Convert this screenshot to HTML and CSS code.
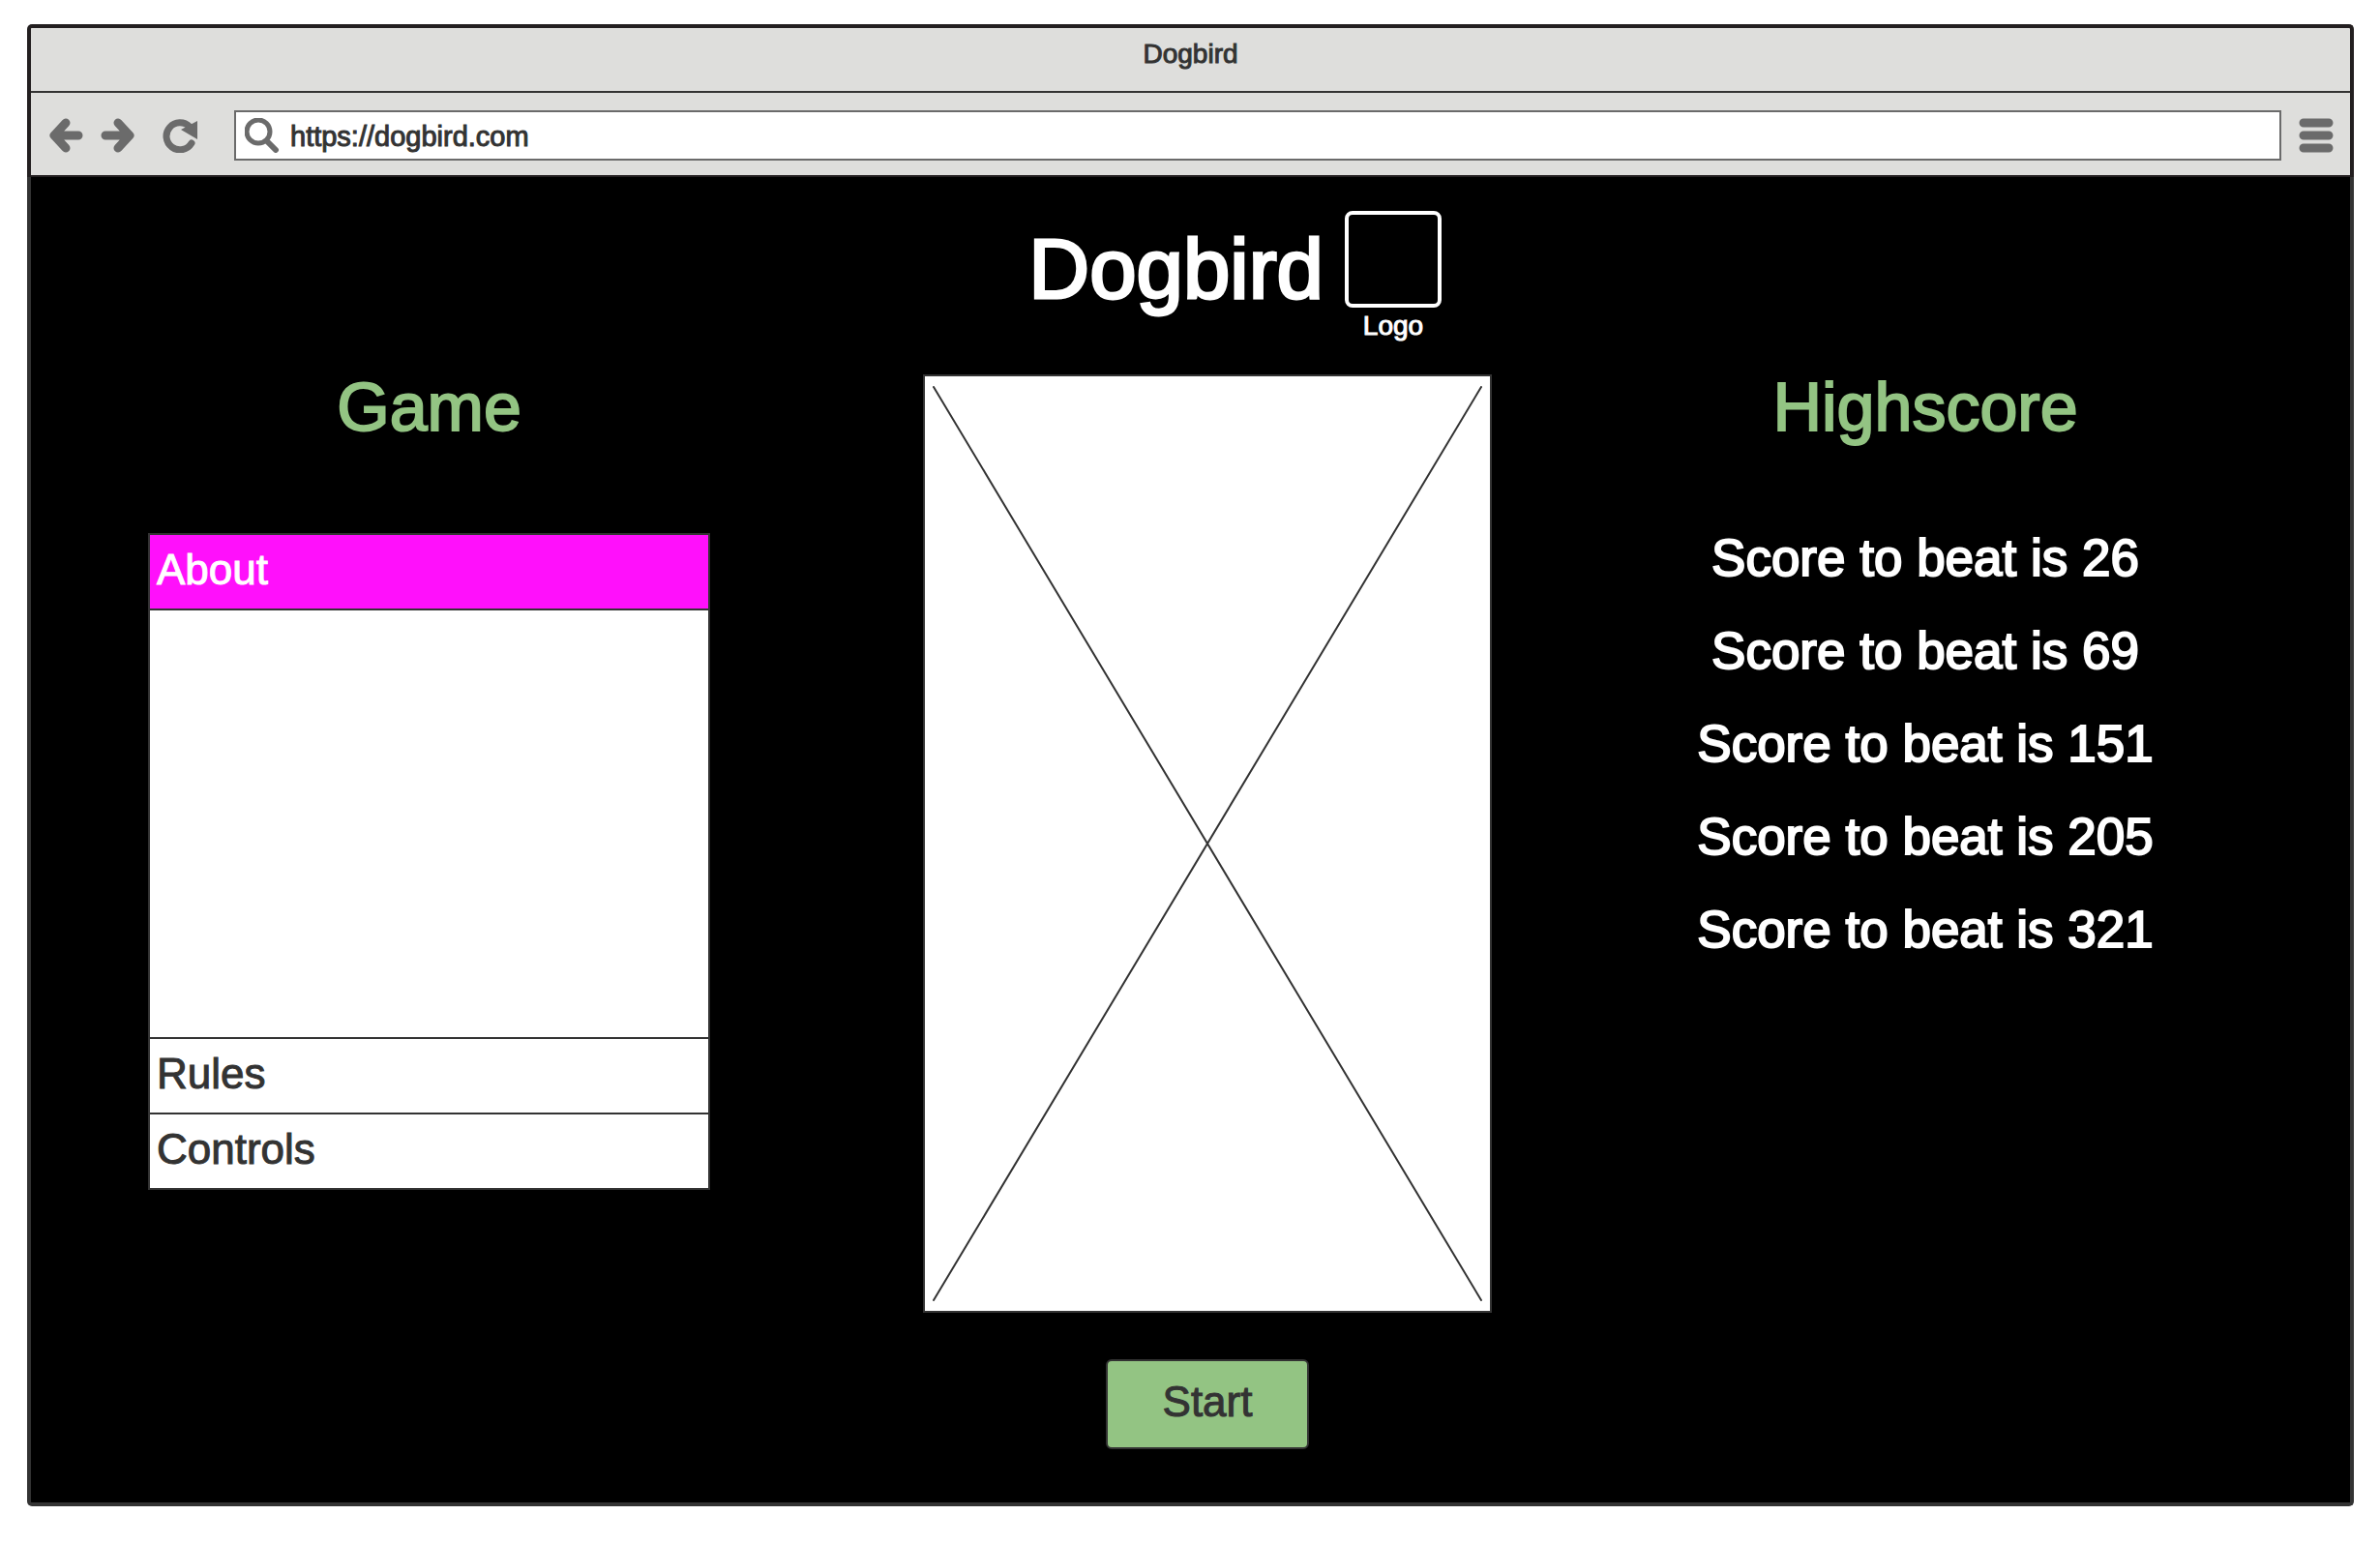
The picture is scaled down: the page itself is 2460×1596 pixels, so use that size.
FILE: index.html
```html
<!DOCTYPE html>
<html lang="en">
<head>
<meta charset="utf-8">
<meta name="viewport" content="width=device-width, initial-scale=1">
<title>Dogbird</title>
<link rel="stylesheet" href="styles.css">
</head>
<body>
<div class="window">
  <header class="chrome">
    <div class="titlebar">Dogbird</div>
    <div class="toolbar">
      <button class="tool" type="button" aria-label="Back">
        <svg viewBox="0 0 36 36"><path d="M31 18H6M18 5L6 18L18 31" fill="none" stroke="currentColor" stroke-width="9" stroke-linecap="round" stroke-linejoin="round"/></svg>
      </button>
      <button class="tool" type="button" aria-label="Forward">
        <svg viewBox="0 0 36 36"><path d="M5 18H30M18 5L30 18L18 31" fill="none" stroke="currentColor" stroke-width="9" stroke-linecap="round" stroke-linejoin="round"/></svg>
      </button>
      <button class="tool tool-reload" type="button" aria-label="Reload">
        <svg viewBox="0 0 36 36"><path d="M28 9A14 14 0 1 0 30 26" fill="none" stroke="currentColor" stroke-width="7" stroke-linecap="round"/><path d="M36 3V22L19 12Z" fill="currentColor"/></svg>
      </button>
      <form class="address">
        <label class="address-label" for="url" aria-label="Address">
          <svg viewBox="0 0 36 36"><circle cx="14" cy="14" r="12" fill="none" stroke="currentColor" stroke-width="5"/><path d="M23 24L32 33" stroke="currentColor" stroke-width="6" stroke-linecap="round"/></svg>
        </label>
        <input class="address-input" id="url" type="text" value="https://dogbird.com" spellcheck="false">
      </form>
      <button class="tool tool-menu" type="button" aria-label="Menu">
        <svg viewBox="0 0 36 36"><path d="M5 5H31M5 18H31M5 31H31" stroke="currentColor" stroke-width="9" stroke-linecap="round"/></svg>
      </button>
    </div>
  </header>

  <main class="page">
    <div class="brand">
      <h1 class="brand-name">Dogbird</h1>
      <figure class="logo">
        <div class="logo-box"></div>
        <figcaption class="logo-caption">Logo</figcaption>
      </figure>
    </div>

    <section class="game">
      <h2 class="heading">Game</h2>
      <div class="accordion">
        <button class="accordion-tab accordion-tab-open" type="button" aria-expanded="true">About</button>
        <div class="accordion-panel"></div>
        <button class="accordion-tab" type="button" aria-expanded="false">Rules</button>
        <button class="accordion-tab" type="button" aria-expanded="false">Controls</button>
      </div>
    </section>

    <section class="play">
      <div class="board">
        <svg class="board-cross" viewBox="0 0 568 946" preserveAspectRatio="none" aria-hidden="true"><path d="M1 1L567 945M567 1L1 945" stroke="#333" stroke-width="2" stroke-linecap="round"/></svg>
      </div>
      <button class="start" type="button">Start</button>
    </section>

    <section class="highscore">
      <h2 class="heading">Highscore</h2>
      <ul class="scores">
        <li>Score to beat is 26</li>
        <li>Score to beat is 69</li>
        <li>Score to beat is 151</li>
        <li>Score to beat is 205</li>
        <li>Score to beat is 321</li>
      </ul>
    </section>
  </main>
</div>
</body>
</html>
```
FILE: styles.css
```css
* {
  box-sizing: border-box;
}

body {
  margin: 0;
  padding: 25px 27px 39px 28px;
  background: #fff;
  color: #333;
  font-family: "Liberation Sans", Arial, sans-serif;
  font-size: 28px;
  -webkit-text-stroke: 1px currentColor;
}

button,
input {
  font: inherit;
  color: inherit;
  -webkit-text-stroke: inherit;
}

h1,
h2,
ul,
figure {
  margin: 0;
  padding: 0;
  font-weight: 400;
}

svg {
  display: block;
}

/* Browser chrome */
.chrome {
  border: 4px solid #231f20;
  border-bottom: 0;
  border-radius: 5px 5px 0 0;
  background: #dededc;
}

.titlebar {
  height: 67px;
  border-bottom: 2px solid #333;
  line-height: 54px;
  text-align: center;
}

.toolbar {
  display: flex;
  align-items: center;
  height: 87px;
  padding: 2px 17px 0 18px;
  border-bottom: 2px solid #231f20;
  gap: 18px;
}

.tool {
  flex: none;
  width: 36px;
  height: 36px;
  padding: 0;
  border: 0;
  background: none;
  color: #6b6b6b;
}

.tool-reload {
  margin: 0 20px 0 10px;
}

.address {
  display: flex;
  flex: 1;
  align-items: center;
  height: 52px;
  padding-left: 9px;
  border: 2px solid #6b6b6b;
  background: #fff;
}

.address-label {
  flex: none;
  width: 36px;
  color: #6b6b6b;
}

.address-input {
  flex: 1;
  min-width: 0;
  height: 48px;
  padding: 4px 10px 0 11px;
  border: 0;
  background: none;
  outline: 0;
  font-size: 29px;
}

/* Page */
.page {
  display: grid;
  grid-template-columns: 581fr 588fr 456fr;
  column-gap: 220px;
  row-gap: 33px;
  padding: 35px 211px 55px 121px;
  border: 4px solid #333;
  border-top: 0;
  border-radius: 0 0 5px 5px;
  background: #000;
}

.brand {
  display: flex;
  grid-column: 2;
  justify-content: flex-end;
  padding-right: 52px;
  gap: 22px;
  color: #fff;
}

.brand-name {
  font-size: 87px;
  line-height: 120px;
  -webkit-text-stroke-width: 3px;
}

.logo-box {
  width: 100px;
  height: 100px;
  border: 4px solid #fff;
  border-radius: 8px;
}

.logo-caption {
  line-height: 38px;
  height: 36px;
  text-align: center;
}

.heading {
  color: #93c483;
  font-size: 70px;
  line-height: 68px;
  text-align: center;
  -webkit-text-stroke-width: 2px;
}

.game {
  grid-column: 1;
}

.accordion {
  display: flex;
  flex-direction: column;
  margin-top: 96px;
  border: 2px solid #333;
  background: #fff;
}

.accordion-tab {
  height: 78px;
  padding: 0 7px 5px;
  border: 0;
  border-top: 2px solid #333;
  background: #fff;
  font-size: 44px;
  text-align: left;
}

.accordion-tab-open {
  height: 76px;
  border-top: 0;
  background: #ff10fb;
  color: #fff;
}

.accordion-panel {
  height: 443px;
  border-top: 2px solid #333;
}

.play {
  display: flex;
  flex-direction: column;
  align-items: center;
  gap: 48px;
}

.board {
  width: 100%;
  height: 970px;
  padding: 10px 8px;
  border: 2px solid #333;
  background: #fff;
}

.board-cross {
  width: 100%;
  height: 100%;
}

.start {
  width: 210px;
  height: 93px;
  padding: 0 0 5px;
  border: 2px solid #333;
  border-radius: 6px;
  background: #93c483;
  font-size: 44px;
}

.highscore {
  display: flex;
  flex-direction: column;
  align-items: center;
  min-width: 0;
}

.scores {
  margin-top: 74px;
  color: #fff;
  font-size: 53px;
  line-height: 96px;
  list-style: none;
  text-align: center;
  white-space: nowrap;
  -webkit-text-stroke-width: 2px;
}
```
